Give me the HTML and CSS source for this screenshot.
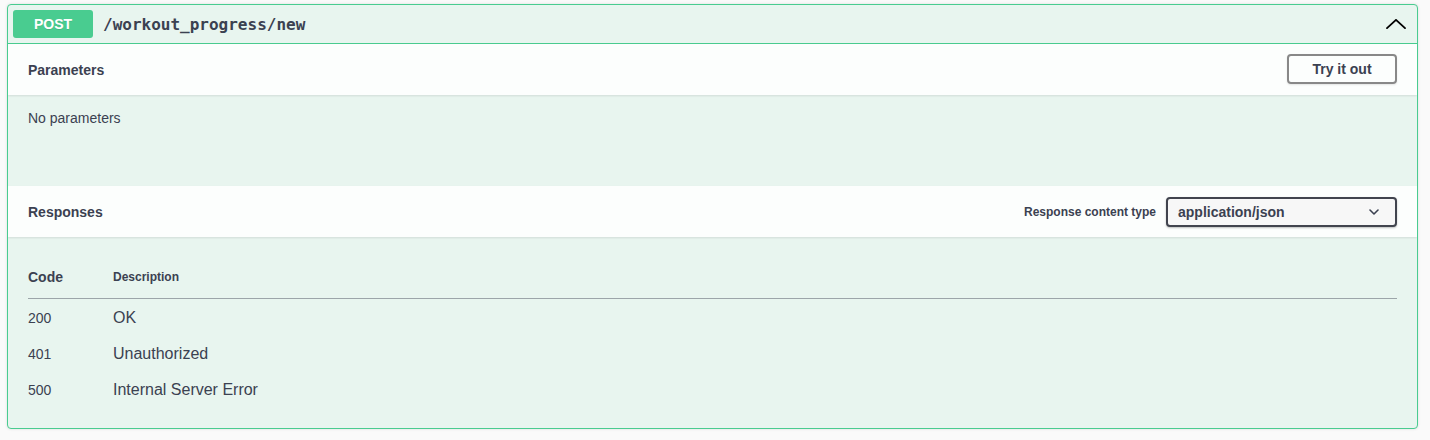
FILE: index.html
```html
<!DOCTYPE html>
<html>
<head>
<meta charset="utf-8">
<link rel="stylesheet" href="styles.css">
</head>
<body>
<div class="page">
  <div class="opblock">
    <div class="summary">
      <span class="method">POST</span>
      <span class="path">/workout_progress/new</span>
      <svg class="arrow" width="20" height="10" viewBox="0 0 20 10"><polyline points="1,9.2 10,0.8 19,9.2" fill="none" stroke="#000" stroke-width="1.8" stroke-linecap="round" stroke-linejoin="round"/></svg>
    </div>
    <div class="section-header">
      <h4 class="title">Parameters</h4>
      <button class="btn">Try it out</button>
    </div>
    <div class="params-body">
      <p class="no-params">No parameters</p>
    </div>
    <div class="section-header">
      <h4 class="title">Responses</h4>
      <div class="content-type">
        <span class="ct-label">Response content type</span>
        <div class="select">
          <span>application/json</span>
          <svg class="sel-arrow" width="10" height="6" viewBox="0 0 10 6"><polyline points="1,1 5,5 9,1" fill="none" stroke="#3b4151" stroke-width="1.6" stroke-linecap="round" stroke-linejoin="round"/></svg>
        </div>
      </div>
    </div>
    <div class="responses-inner">
      <table class="responses-table">
        <thead>
          <tr><td class="col-code hd">Code</td><td class="col-desc hd">Description</td></tr>
        </thead>
        <tbody>
          <tr><td class="col-code">200</td><td class="col-desc">OK</td></tr>
          <tr><td class="col-code">401</td><td class="col-desc">Unauthorized</td></tr>
          <tr><td class="col-code">500</td><td class="col-desc">Internal Server Error</td></tr>
        </tbody>
      </table>
    </div>
  </div>
</div>
</body>
</html>
```
FILE: styles.css
```css
html, body {
  margin: 0;
  padding: 0;
  background: #fafafa;
}
body {
  font-family: "Liberation Sans", Arial, sans-serif;
  color: #3b4151;
}
.page {
  padding: 4px 12px 11px 7px;
}
.opblock {
  border: 1px solid #49cc90;
  border-radius: 4px;
  background: #e8f5ef;
  box-shadow: 0 0 3px rgba(0, 0, 0, 0.12);
  overflow: hidden;
}
.summary {
  display: flex;
  align-items: center;
  padding: 5px;
  border-bottom: 1px solid #49cc90;
}
.method {
  display: inline-block;
  width: 80px;
  height: 28px;
  line-height: 28px;
  text-align: center;
  background: #49cc90;
  color: #fff;
  font-weight: 700;
  font-size: 14px;
  border-radius: 3px;
  text-shadow: 0 1px 0 rgba(0, 0, 0, 0.1);
}
.path {
  flex: 1;
  padding: 0 10px;
  font-family: "DejaVu Sans Mono", monospace;
  font-weight: 700;
  font-size: 16px;
  color: #3b4151;
}
.arrow {
  margin-right: 6px;
  margin-top: -1px;
  display: block;
}
.section-header {
  height: 51px;
  box-sizing: border-box;
  display: flex;
  align-items: center;
  justify-content: space-between;
  padding: 0 20px;
  background: rgba(255, 255, 255, 0.85);
  box-shadow: 0 1px 2px rgba(0, 0, 0, 0.1);
  position: relative;
}
.title {
  margin: 0;
  font-size: 14px;
  font-weight: 700;
  color: #3b4151;
}
.btn {
  font-family: "Liberation Sans", Arial, sans-serif;
  font-size: 14px;
  font-weight: 700;
  color: #3b4151;
  background: transparent;
  border: 2px solid #888;
  border-radius: 4px;
  width: 110px;
  height: 30px;
  padding: 0;
  box-shadow: 0 1px 2px rgba(0, 0, 0, 0.1);
  margin-top: -1px;
}
.params-body {
  height: 91px;
  box-sizing: border-box;
  padding: 15px 20px;
}
.no-params {
  margin: 0;
  font-size: 14px;
  line-height: 17px;
  color: #3b4151;
}
.content-type {
  display: flex;
  align-items: center;
  gap: 10px;
}
.ct-label {
  font-size: 12px;
  font-weight: 700;
  color: #3b4151;
}
.select {
  width: 231px;
  height: 30px;
  box-sizing: border-box;
  border: 2px solid #41444e;
  border-radius: 4px;
  box-shadow: 0 1px 2px rgba(0, 0, 0, 0.25);
  background: #f7f7f7;
  display: flex;
  align-items: center;
  justify-content: space-between;
  padding: 0 16px 0 10px;
  font-size: 14px;
  font-weight: 700;
  color: #3b4151;
}
.sel-arrow {
  display: block;
}
.responses-inner {
  padding: 20px 20px 21px;
}
.responses-table {
  width: 100%;
  border-collapse: collapse;
}
.responses-table td {
  padding: 0;
  vertical-align: middle;
}
.responses-table thead td {
  padding: 12px 0;
  border-bottom: 1px solid rgba(59, 65, 81, 0.25);
  line-height: 17px;
}
.responses-table tbody td {
  padding: 9px 0 7px;
  line-height: 20px;
}
.col-code {
  width: 85px;
  font-size: 14px;
}
.col-desc {
  font-size: 16px;
}
.col-code.hd {
  font-size: 14px;
  font-weight: 700;
}
.col-desc.hd {
  font-size: 12px;
  font-weight: 700;
}
```
